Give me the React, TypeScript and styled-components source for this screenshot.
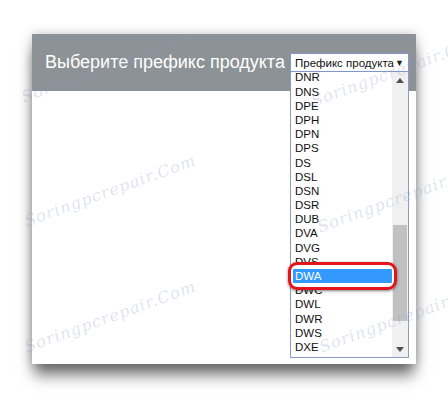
import React from 'react'
import styled, { createGlobalStyle } from 'styled-components'

const GlobalStyle = createGlobalStyle`
  html, body {
    margin: 0;
    padding: 0;
    background: #ffffff;
  }
  body {
    font-family: 'Liberation Sans', Arial, sans-serif;
  }
`

const Page = styled.div`
  position: relative;
  width: 448px;
  height: 397px;
  overflow: hidden;
  padding: 34px 0 0 32px;
  box-sizing: border-box;
`

const Panel = styled.div`
  width: 384px;
  height: 330px;
  background: #ffffff;
  box-shadow: 0 13px 14px -2px rgba(0, 0, 0, 0.55), 0 0 10px rgba(0, 0, 0, 0.22);
`

const Header = styled.div`
  height: 57px;
  background: #8c9295;
  display: flex;
  align-items: center;
  justify-content: space-between;
  padding: 0 7px 0 13px;
  box-sizing: border-box;
`

const Title = styled.div`
  color: #ffffff;
  font-size: 18px;
  white-space: nowrap;
`

const SelectWrap = styled.div`
  position: relative;
  width: 119px;
  height: 19px;
`

const SelectBox = styled.div`
  height: 19px;
  box-sizing: border-box;
  border: 1px solid #7f97c9;
  background: #ffffff;
  display: flex;
  align-items: center;
  justify-content: space-between;
  padding: 0 4px 0 4px;
  font-size: 11.5px;
  color: #111111;
  white-space: nowrap;
`

const Caret = styled.span`
  font-size: 9px;
  color: #222222;
`

const List = styled.div`
  position: absolute;
  top: 19px;
  left: 0;
  width: 119px;
  height: 286px;
  box-sizing: border-box;
  border: 1px solid #8b9cc0;
  border-top: none;
  background: #ffffff;
  display: flex;
`

const Items = styled.div`
  flex: 1;
  overflow: hidden;
  padding-top: 1px;
`

const ItemsInner = styled.div`
  margin-top: -2.6px;
`

type ItemProps = { $selected?: boolean }

const Item = styled.div<ItemProps>`
  height: 14.2px;
  line-height: 14.2px;
  font-size: 11.5px;
  padding-left: 4px;
  color: ${({ $selected }) => ($selected ? '#ffffff' : '#111111')};
  background: ${({ $selected }) => ($selected ? '#3399ff' : 'transparent')};
`

const Scrollbar = styled.div`
  width: 16px;
  background: #f0f0f0;
  display: flex;
  flex-direction: column;
  align-items: center;
  justify-content: space-between;
  position: relative;
`

const Arrow = styled.div`
  height: 16px;
  display: flex;
  align-items: center;
  justify-content: center;
`

const Thumb = styled.div`
  position: absolute;
  left: 1px;
  right: 1px;
  top: 153px;
  height: 96px;
  background: #c1c1c1;
`

const Marker = styled.div`
  position: absolute;
  left: -2px;
  top: 209px;
  width: 109px;
  height: 28px;
  box-sizing: border-box;
  border: 3.5px solid #e3141b;
  border-radius: 9px;
  box-shadow: inset 0 0 0 2px #ffffff, 0 1px 3px rgba(0, 0, 0, 0.5);
  pointer-events: none;
`

const Watermark = styled.div`
  position: absolute;
  font-family: 'DejaVu Serif', serif;
  font-style: italic;
  font-size: 16px;
  letter-spacing: 1px;
  color: rgba(140, 150, 205, 0.28);
  transform: rotate(-20deg);
  transform-origin: left center;
  white-space: nowrap;
  pointer-events: none;
`

const items = [
  'DNR', 'DNS', 'DPE', 'DPH', 'DPN', 'DPS', 'DS', 'DSL', 'DSN', 'DSR', 'DUB',
  'DVA', 'DVG', 'DVS', 'DWA', 'DWC', 'DWL', 'DWR', 'DWS', 'DXE', 'DXS'
]

const marks = [
  { x: 22, y: 88 },
  { x: 25, y: 212 },
  { x: 25, y: 338 },
  { x: 312, y: 92 },
  { x: 318, y: 218 },
  { x: 320, y: 338 }
]

const App = () => {
  return (
    <Page>
      <GlobalStyle />
      <Panel>
        <Header>
          <Title>Выберите префикс продукта</Title>
          <SelectWrap>
            <SelectBox>
              <span>Префикс продукта</span>
              <Caret>▼</Caret>
            </SelectBox>
            <List>
              <Items>
                <ItemsInner>
                  {items.map((name) => (
                    <Item key={name} $selected={name === 'DWA'}>
                      {name}
                    </Item>
                  ))}
                </ItemsInner>
              </Items>
              <Scrollbar>
                <Arrow>
                  <svg width="8" height="5" viewBox="0 0 8 5">
                    <path d="M0 5 L4 0 L8 5 Z" fill="#505050" />
                  </svg>
                </Arrow>
                <Thumb />
                <Arrow>
                  <svg width="8" height="5" viewBox="0 0 8 5">
                    <path d="M0 0 L4 5 L8 0 Z" fill="#505050" />
                  </svg>
                </Arrow>
              </Scrollbar>
            </List>
            <Marker />
          </SelectWrap>
        </Header>
      </Panel>
      {marks.map((m, i) => (
        <Watermark key={i} style={{ left: m.x, top: m.y }}>
          Soringpcrepair.Com
        </Watermark>
      ))}
    </Page>
  )
}

export default App
